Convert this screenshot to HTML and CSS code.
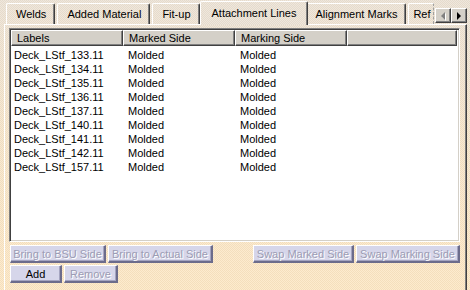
FILE: index.html
```html
<!DOCTYPE html>
<html>
<head>
    <meta name="viewport" content="width=device-width, initial-scale=1">
    <link rel="stylesheet" href="styles.css">
</head>
<body>
    <div class="window">
        <div class="tabbar">
            <div class="tabs">
                <div class="tab">Welds</div>
                <div class="tab">Added Material</div>
                <div class="tab">Fit-up</div>
                <div class="tab active">Attachment Lines</div>
                <div class="tab">Alignment Marks</div>
                <div class="tab cut">Ref</div>
            </div>
            <div class="scroller">
                <div class="arrow"><span class="tri left"></span></div>
                <div class="arrow"><span class="tri right"></span></div>
            </div>
        </div>

        <div class="panel">
            <div class="list">
                <div class="head">
                    <div class="hcell">Labels</div>
                    <div class="hcell">Marked Side</div>
                    <div class="hcell">Marking Side</div>
                    <div class="hcell"></div>
                </div>
                <div class="rows">
                    <div class="row"><span>Deck_LStf_133.11</span><span>Molded</span><span>Molded</span></div>
                    <div class="row"><span>Deck_LStf_134.11</span><span>Molded</span><span>Molded</span></div>
                    <div class="row"><span>Deck_LStf_135.11</span><span>Molded</span><span>Molded</span></div>
                    <div class="row"><span>Deck_LStf_136.11</span><span>Molded</span><span>Molded</span></div>
                    <div class="row"><span>Deck_LStf_137.11</span><span>Molded</span><span>Molded</span></div>
                    <div class="row"><span>Deck_LStf_140.11</span><span>Molded</span><span>Molded</span></div>
                    <div class="row"><span>Deck_LStf_141.11</span><span>Molded</span><span>Molded</span></div>
                    <div class="row"><span>Deck_LStf_142.11</span><span>Molded</span><span>Molded</span></div>
                    <div class="row"><span>Deck_LStf_157.11</span><span>Molded</span><span>Molded</span></div>
                </div>
            </div>

            <div class="buttons">
                <button class="btn off w96">Bring to BSU Side</button>
                <button class="btn off w105">Bring to Actual Side</button>
                <div class="spacer"></div>
                <button class="btn off w101">Swap Marked Side</button>
                <button class="btn off w104">Swap Marking Side</button>
            </div>
            <div class="buttons">
                <button class="btn w52">Add</button>
                <button class="btn off w54">Remove</button>
            </div>
        </div>
    </div>
</body>
</html>
```

FILE: styles.css
```css
body {
    margin: 0;
    font-family: "Liberation Sans", Arial, sans-serif;
    font-size: 11px;
    color: #000;
}

.window {
    width: 470px;
    height: 290px;
    overflow: hidden;
    display: flex;
    flex-direction: column;
    background:
        repeating-conic-gradient(rgba(255, 255, 255, 0.18) 0 25%, rgba(0, 0, 0, 0.03) 0 50%) 0 0 / 2px 2px,
        linear-gradient(#ece2d4, #f6e4c8 45%, #fde6c2);
}

/* tab strip */
.tabbar {
    display: flex;
    align-items: flex-end;
    height: 24px;
    padding-left: 6px;
    flex-shrink: 0;
}

.tabs {
    display: flex;
    align-items: flex-end;
    width: 426px;
    height: 24px;
}

.tab {
    flex-shrink: 0;
    height: 20px;
    line-height: 20px;
    margin-left: 2px;
    padding: 0 8px 0 9px;
    border-top: 1px solid #fff;
    border-left: 1px solid #fff;
    border-right: 1px solid #404040;
    box-shadow: inset -1px 0 0 #808080;
    border-radius: 2px 2px 0 0;
}

.tab:first-child {
    margin-left: 0;
}

.tab.active {
    height: 23px;
    line-height: 22px;
    margin: 0 -2px -1px 0;
    padding: 0 10px 0 11px;
    position: relative;
    z-index: 1;
    background:
        repeating-conic-gradient(rgba(255, 255, 255, 0.18) 0 25%, rgba(0, 0, 0, 0.03) 0 50%) 0 0 / 2px 2px,
        #ece2d4;
}

.tab.active + .tab {
    margin-left: 0;
}

.tab.cut {
    padding: 0 2px 0 4px;
    border-right: 1px dashed #a0a0a0;
    box-shadow: none;
    border-radius: 2px 0 0 0;
}

.scroller {
    display: flex;
    align-self: flex-start;
    margin-top: 8px;
    margin-left: auto;
    margin-right: 3px;
}

.arrow {
    width: 14px;
    height: 13px;
    background: #d4d0c8;
    border-top: 1px solid #fff;
    border-left: 1px solid #fff;
    border-right: 1px solid #404040;
    border-bottom: 1px solid #404040;
    box-shadow: inset -1px -1px 0 #808080;
    display: flex;
    align-items: center;
    justify-content: center;
}

.tri {
    width: 0;
    height: 0;
    border-top: 4px solid transparent;
    border-bottom: 4px solid transparent;
}

.tri.left {
    border-right: 4px solid #808080;
    filter: drop-shadow(1px 1px 0 #fff);
}

.tri.right {
    border-left: 4px solid #000;
}

/* panel */
.panel {
    flex: 1;
    box-sizing: border-box;
    margin-left: 4px;
    width: 463px;
    border-top: 1px solid #fff;
    border-left: 1px solid #fff;
    border-right: 1px solid #404040;
    box-shadow: inset -1px 0 0 #808080;
    padding: 3px 6px 0 4px;
    display: flex;
    flex-direction: column;
}

.list {
    height: 209px;
    flex-shrink: 0;
    background: #fff;
    border-top: 1px solid #808080;
    border-left: 1px solid #808080;
    border-right: 1px solid #fff;
    border-bottom: 1px solid #fff;
    box-shadow: inset 1px 1px 0 #404040, inset -1px -1px 0 #d4d0c8;
    padding: 1px 2px 2px 1px;
    display: flex;
    flex-direction: column;
}

.head {
    display: flex;
    height: 16px;
    flex-shrink: 0;
}

.hcell {
    width: 112px;
    height: 16px;
    line-height: 15px;
    box-sizing: border-box;
    padding-left: 5px;
    background: #d4d0c8;
    border-top: 1px solid #fff;
    border-left: 1px solid #fff;
    border-right: 1px solid #404040;
    border-bottom: 1px solid #404040;
    box-shadow: inset -1px -1px 0 #808080;
}

.hcell:last-child {
    flex: 1;
}

.rows {
    padding-top: 2px;
}

.row {
    display: flex;
    height: 14px;
    line-height: 14px;
}

.row span {
    width: 112px;
    padding-left: 3px;
    box-sizing: border-box;
}

.row span + span {
    padding-left: 5px;
}

/* buttons */
.buttons {
    display: flex;
    gap: 2px;
    margin-top: 3px;
    padding-left: 1px;
}

.buttons:last-child {
    margin-top: 2px;
}

.spacer {
    flex: 1;
}

.btn {
    height: 18px;
    padding: 0;
    font-family: "Liberation Sans", Arial, sans-serif;
    font-size: 11px;
    color: #000;
    background: #d6d6ea;
    border: 0;
    border-top: 1px solid #fff;
    border-left: 1px solid #fff;
    border-right: 2px solid #6c6c8c;
    border-bottom: 2px solid #6c6c8c;
    box-shadow: inset -1px -1px 0 #a4a4c0;
}

.btn.off {
    color: #9c9cb4;
    text-shadow: 1px 1px 0 #fff;
}

.w96 { width: 96px; }
.w105 { width: 105px; }
.w101 { width: 101px; }
.w104 { width: 104px; }
.w52 { width: 52px; }
.w54 { width: 54px; }
```
